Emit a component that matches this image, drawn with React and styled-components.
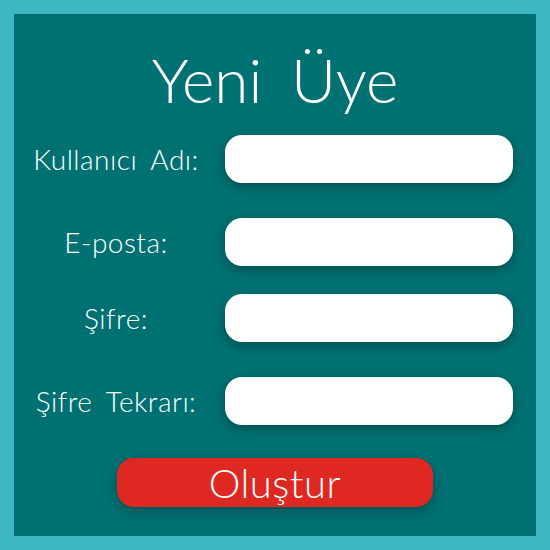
import React from 'react';
import styled, { createGlobalStyle } from 'styled-components';

const GlobalStyle = createGlobalStyle`
  html, body {
    margin: 0;
    padding: 0;
    background: #3eb7c3;
  }
  * {
    box-sizing: border-box;
  }
`;

const Frame = styled.div`
  width: 550px;
  height: 550px;
  padding: 14px;
  background: #3eb7c3;
`;

const Panel = styled.div`
  height: 100%;
  background: #007173;
  display: flex;
  flex-direction: column;
  align-items: stretch;
  font-family: Lato, 'Liberation Sans', sans-serif;
  color: #ffffff;
`;

const Title = styled.h1`
  margin: 0;
  padding-top: 28px;
  height: 121px;
  font-size: 62px;
  font-weight: 300;
  line-height: 1.2;
  text-align: center;
  word-spacing: 12px;
`;

const Form = styled.form`
  display: flex;
  flex-direction: column;
  padding: 0 16px;
`;

const Row = styled.div`
  display: grid;
  grid-template-columns: 172px 288px;
  column-gap: 23px;
  align-items: center;
  margin-top: ${p => p.$gap}px;
`;

const Label = styled.label`
  font-size: 28px;
  font-weight: 300;
  letter-spacing: 0.5px;
  text-align: center;
  white-space: nowrap;
  word-spacing: 6px;
`;

const Input = styled.input`
  height: 48px;
  border: none;
  border-radius: 17px;
  background: #ffffff;
  box-shadow: 0 4px 12px rgba(0, 40, 40, 0.45);
  outline: none;
  padding: 0 16px;
`;

const Button = styled.button`
  align-self: center;
  width: 316px;
  height: 49px;
  margin-top: 33px;
  border: none;
  border-radius: 17px;
  background: #df2822;
  color: #ffffff;
  font-family: Lato, 'Liberation Sans', sans-serif;
  font-size: 40px;
  font-weight: 300;
  letter-spacing: 0.5px;
  line-height: 1;
  box-shadow: 0 4px 12px rgba(0, 40, 40, 0.45);
  cursor: pointer;
`;

const fields = [
  { label: 'Kullanıcı Adı:', type: 'text', gap: 0 },
  { label: 'E-posta:', type: 'email', gap: 35 },
  { label: 'Şifre:', type: 'password', gap: 28 },
  { label: 'Şifre Tekrarı:', type: 'password', gap: 35 },
];

export default function App() {
  return (
    <Frame>
      <GlobalStyle />
      <Panel>
        <Title>Yeni Üye</Title>
        <Form onSubmit={e => e.preventDefault()}>
          {fields.map(f => (
            <Row key={f.label} $gap={f.gap}>
              <Label>{f.label}</Label>
              <Input type={f.type} />
            </Row>
          ))}
          <Button type="submit">Oluştur</Button>
        </Form>
      </Panel>
    </Frame>
  );
}
